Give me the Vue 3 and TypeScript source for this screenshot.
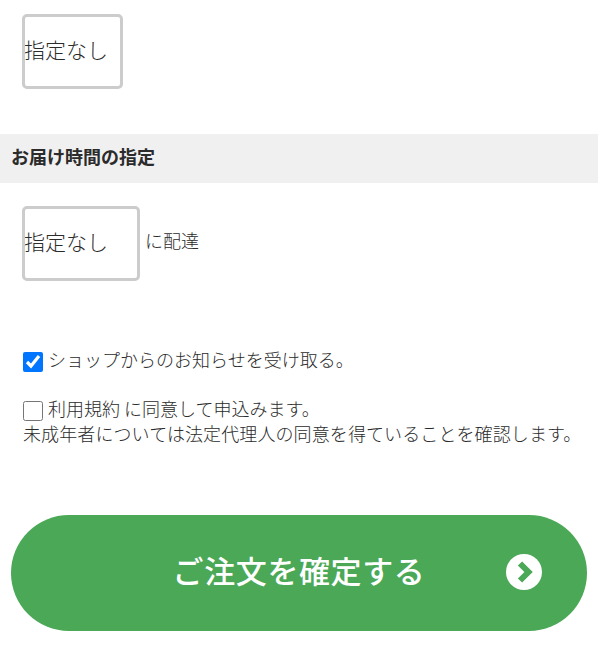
<script setup lang="ts">
import { ref } from 'vue'
const notify = ref(true)
const agree = ref(false)
</script>

<template>
  <main class="page">
    <section class="field first">
      <select class="select date"><option>指定なし</option></select>
    </section>
    <h2 class="heading">お届け時間の指定</h2>
    <section class="field time">
      <select class="select wide"><option>指定なし</option></select>
      <span class="suffix">に配達</span>
    </section>
    <section class="consents">
      <label class="line"><input v-model="notify" type="checkbox" class="check" /><span>ショップからのお知らせを受け取る。</span></label>
      <div class="terms">
        <label class="line"><input v-model="agree" type="checkbox" class="check" /><span>利用規約 に同意して申込みます。</span></label>
        <p class="note">未成年者については法定代理人の同意を得ていることを確認します。</p>
      </div>
    </section>
    <button class="submit" type="button">
      <span class="submit-label">ご注文を確定する</span>
      <svg class="submit-icon" viewBox="0 0 36 36" aria-hidden="true">
        <circle cx="18" cy="18" r="18" fill="#fff" />
        <path d="M14 9.5 L22.5 18 L14 26.5" fill="none" stroke="#4aa856" stroke-width="6" />
      </svg>
    </button>
  </main>
</template>

<style scoped>
.page {
  width: 598px;
  height: 657px;
  overflow: hidden;
  background: #fff;
  color: #2b2b2b;
  font-family: "Noto Sans CJK JP", "Noto Sans", sans-serif;
  font-weight: 300;
}
.field {
  display: flex;
  align-items: center;
  padding-left: 22px;
}
.first {
  padding-top: 14px;
}
.select {
  appearance: none;
  height: 75px;
  margin: 0;
  padding: 0 0 5px;
  border: 3px solid #ccc;
  border-radius: 5px;
  background: #fff;
  color: #2b2b2b;
  font: inherit;
  font-size: 21px;
  text-indent: -1px;
}
.date {
  width: 101px;
}
.wide {
  width: 118px;
}
.heading {
  height: 49px;
  margin: 45px 0 23px;
  padding-left: 11px;
  background: #f0f0f0;
  font-size: 18px;
  font-weight: 700;
  line-height: 45px;
}
.suffix {
  margin: 0 0 8px 5px;
  font-size: 18px;
}
.consents {
  margin: 66px 0 0 23px;
  font-size: 18px;
  line-height: 25px;
}
.line {
  display: flex;
  align-items: center;
  gap: 5px;
}
.check {
  width: 20px;
  height: 20px;
  margin: 4px 0 0;
  accent-color: #0075ff;
}
.terms {
  margin-top: 24px;
}
.note {
  margin: 0;
  white-space: nowrap;
  letter-spacing: 0.1px;
}
.submit {
  position: relative;
  display: flex;
  align-items: center;
  justify-content: center;
  width: 576px;
  height: 116px;
  margin: 69px 0 0 11px;
  padding: 0 0 7px;
  border: 0;
  border-radius: 58px;
  background: #4aa856;
  color: #fff;
  font: inherit;
}
.submit-label {
  font-size: 31px;
  font-weight: 500;
  letter-spacing: 0.6px;
}
.submit-icon {
  position: absolute;
  left: 495px;
  top: 39px;
  width: 36px;
  height: 36px;
}
</style>
